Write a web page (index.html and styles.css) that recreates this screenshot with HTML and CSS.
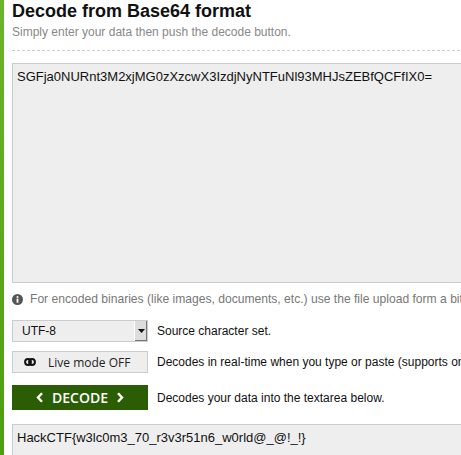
FILE: index.html
```html
<!DOCTYPE html>
<html>
<head>
<meta charset="utf-8">
<link rel="stylesheet" href="styles.css">
</head>
<body>
<div class="page">
  <div class="sidebar"></div>
  <main class="content">
    <h1 class="title">Decode from Base64 format</h1>
    <p class="subtitle">Simply enter your data then push the decode button.</p>
    <div class="input-box">SGFja0NURnt3M2xjMG0zXzcwX3IzdjNyNTFuNl93MHJsZEBfQCFfIX0=</div>
    <p class="info"><svg class="info-icon" viewBox="0 0 12 12" width="11" height="11"><circle cx="6" cy="6" r="6" fill="#555"/><rect x="5" y="5" width="2" height="4.5" fill="#fff"/><circle cx="6" cy="3.2" r="1.1" fill="#fff"/></svg>For encoded binaries (like images, documents, etc.) use the file upload form a bit further down on this page.</p>
    <div class="row row-first">
      <div class="select"><span class="select-text">UTF-8</span><span class="select-arrow"><svg viewBox="0 0 7 4" width="7" height="4"><path d="M0 0H7L3.5 4Z" fill="#111"/></svg></span></div>
      <span class="row-label">Source character set.</span>
    </div>
    <div class="row">
      <div class="live-btn"><svg class="toggle" viewBox="0 0 12 8" width="12" height="8"><circle cx="4" cy="4" r="2.9" fill="none" stroke="#111" stroke-width="2"/><circle cx="8" cy="4" r="2.9" fill="none" stroke="#111" stroke-width="2"/></svg>Live mode OFF</div>
      <span class="row-label">Decodes in real-time when you type or paste (supports only the UTF-8 character set).</span>
    </div>
    <div class="row row-decode">
      <div class="decode-btn"><svg class="chev" viewBox="0 0 8 11" width="8" height="11"><path d="M6 1.2L2 5.5L6 9.8" fill="none" stroke="#fff" stroke-width="2.4"/></svg>DECODE<svg class="chev" viewBox="0 0 8 11" width="8" height="11"><path d="M2 1.2L6 5.5L2 9.8" fill="none" stroke="#fff" stroke-width="2.4"/></svg></div>
      <span class="row-label">Decodes your data into the textarea below.</span>
    </div>
    <div class="output-box">HackCTF{w3lc0m3_70_r3v3r51n6_w0rld@_@!_!}</div>
  </main>
</div>
</body>
</html>
```
FILE: styles.css
```css
html, body {
  margin: 0;
  padding: 0;
  background: #fff;
  overflow: hidden;
}
.page {
  display: flex;
  width: 700px;
  min-height: 455px;
  font-family: "Liberation Sans", Arial, sans-serif;
}
.sidebar {
  width: 4px;
  flex: none;
  background: linear-gradient(to bottom, #6bb52c, #4a9d0c);
}
.content {
  flex: 1;
  padding-left: 8px;
}
.title {
  margin: 0;
  padding-top: 1px;
  font-size: 18px;
  line-height: 20px;
  font-weight: bold;
  color: #111;
}
.subtitle {
  margin: 3px 0 0;
  font-size: 12px;
  line-height: 16px;
  color: #888;
  padding-bottom: 10px;
  border-bottom: 1px dashed #ccc;
}
.input-box {
  margin-top: 12px;
  height: 208px;
  background: #eee;
  border: 1px solid #ccc;
  padding: 5px 4px;
  font-size: 13px;
  line-height: 16px;
  color: #111;
}
.info {
  margin: 8px 0 0;
  display: flex;
  align-items: center;
  gap: 7px;
  font-size: 12.1px;
  line-height: 16px;
  color: #777;
  white-space: nowrap;
}
.info-icon { flex: none; }
.row {
  display: flex;
  align-items: center;
  gap: 9px;
  margin-top: 9px;
  font-size: 12px;
  color: #111;
  white-space: nowrap;
}
.row-first { margin-top: 13px; }
.select {
  width: 134px;
  height: 20px;
  border: 1px solid #ccc;
  background: #eee;
  display: flex;
  align-items: center;
  justify-content: space-between;
}
.select-text {
  padding-left: 9px;
  font-size: 12px;
}
.select-arrow {
  width: 12px;
  height: 20px;
  background: #ddd;
  border-left: 1px solid #fff;
  box-shadow: inset -1px -1px 0 #777;
  display: flex;
  align-items: center;
  justify-content: center;
}
.live-btn {
  border: 1px solid #ccc;
  background: #eee;
  display: flex;
  align-items: center;
  gap: 12px;
  padding-left: 11px;
  box-sizing: border-box;
  width: 136px;
  height: 22px;
  font-family: "Open Sans", sans-serif;
  font-size: 12px;
  color: #222;
}
.toggle { flex: none; }
.row-decode { margin-top: 12px; }
.decode-btn {
  width: 136px;
  height: 25px;
  background: #2b5e04;
  color: #fff;
  font-family: "Open Sans", sans-serif;
  font-weight: 600;
  font-size: 14px;
  display: flex;
  align-items: center;
  justify-content: center;
  gap: 8px;
}
.chev { flex: none; }
.output-box {
  margin-top: 14px;
  height: 60px;
  background: #eee;
  border: 1px solid #ccc;
  padding: 5px 4px;
  font-size: 13px;
  line-height: 16px;
  color: #111;
}
```
